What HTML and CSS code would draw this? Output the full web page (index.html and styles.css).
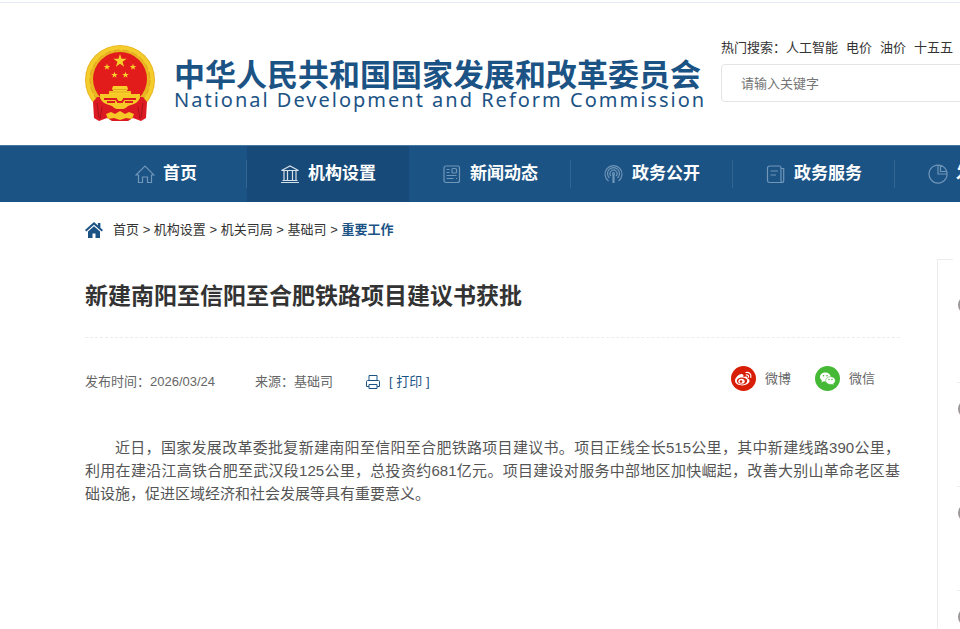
FILE: index.html
```html
<!DOCTYPE html>
<html lang="zh-CN">
<head>
<meta charset="utf-8">
<meta name="viewport" content="width=device-width, initial-scale=1">
<title>新建南阳至信阳至合肥铁路项目建议书获批</title>
<link rel="stylesheet" href="styles.css">
</head>
<body>
<header class="header">
  <div class="container header-row">
    <a class="logo" href="#">
      <svg class="emblem" viewBox="0 0 70 76" aria-hidden="true">
        <defs>
          <path id="star" d="M0-1 .225-.309.951-.309.363.118.588.809 0 .382-.588.809-.363.118-.951-.309-.225-.309Z"/>
        </defs>
        <circle cx="35" cy="35" r="35" fill="#e9b521"/>
        <circle cx="35" cy="35" r="32" fill="none" stroke="#f4cc2c" stroke-width="4"/>
        <circle cx="35" cy="35" r="30" fill="none" stroke="#dfa51e" stroke-width="1" stroke-dasharray="6 3"/>
        <circle cx="35" cy="34" r="27" fill="#e21b1b"/>
        <g fill="#f8d22c">
          <use href="#star" transform="translate(35 16) scale(7)"/>
          <use href="#star" transform="translate(22 22) scale(3.5)"/>
          <use href="#star" transform="translate(48 22) scale(3.5)"/>
          <use href="#star" transform="translate(29.500 30) scale(3.5)"/>
          <use href="#star" transform="translate(40.500 30) scale(3.5)"/>
        </g>
        <path d="M28 41h14l1 3h-1v2h4v3H24v-3h4v-2h-1Z" fill="#f8cf2b"/>
        <path d="M27 44.500h16M24 47h22" stroke="#e0aa1f" stroke-width="1"/>
        <path d="M12 52h46l4 5-1 16-5 3-8-3-5 3H27l-5-3-8 3-5-3-1-16Z" fill="#dc1a22"/>
        <path d="M15 49h40v4c-2 4-5 6-9 7-5 1-5 4-8 4h-6c-3 0-3-3-8-4-4-1-7-3-9-7Z" fill="#f6c927"/>
        <path d="M19 54h12l2 3h4l2-3h12M22 57h8M40 57h8" fill="none" stroke="#dc1a22" stroke-width="2"/>
        <path d="m21 69 5-2 4 2 5-3 5 3 4-2 5 2-2 5-6-1-6 2-6-2-6 1Z" fill="#f6c927"/>
        <path d="m12 58 2 15m3-11-2 12m43-16-2 15m-3-11 2 12" stroke="#a9131d" stroke-width="1"/>
      </svg>
      <span class="logo-text">
        <strong class="logo-cn">中华人民共和国国家发展和改革委员会</strong>
        <span class="logo-en" lang="en">National Development and Reform Commission</span>
      </span>
    </a>
    <div class="search">
      <div class="hot"><span>热门搜索：</span><a href="#">人工智能</a><a href="#">电价</a><a href="#">油价</a><a href="#">十五五</a></div>
      <input class="search-box" type="text" aria-label="搜索" placeholder="请输入关键字">
    </div>
  </div>
</header>

<nav class="nav" aria-label="主导航">
  <ul class="container nav-list">
    <li><a class="nav-link" href="#">
      <svg class="nav-icon" viewBox="0 0 20 20" aria-hidden="true"><path d="M1 11 10 2l9 9h-2.500v7.500h-4v-5.500h-5v5.500h-4V11Z"/></svg>首页</a></li>
    <li><a class="nav-link active" href="#">
      <svg class="nav-icon" viewBox="0 0 20 20" aria-hidden="true"><path d="M1.500 6.500 10 2l8.500 4.500ZM1 18.500h18M2.500 16.500h15M4 7v9M7.500 7v9M12.500 7v9M16 7v9"/></svg>机构设置</a></li>
    <li><a class="nav-link" href="#">
      <svg class="nav-icon" viewBox="0 0 20 20" aria-hidden="true"><rect x="2" y="2" width="15.500" height="16.500" rx="2"/><rect x="10" y="4.500" width="4.500" height="4.500" rx="1"/><path d="M4.500 5.500h3M4.500 8.500h3M4.500 11.500h10M4.500 14.500h7M14 14.500h1"/></svg>新闻动态</a></li>
    <li><a class="nav-link" href="#">
      <svg class="nav-icon" viewBox="0 0 20 20" aria-hidden="true"><path d="M4.500 17a8.500 8.500 0 1 1 10 0M5.500 14a6 6 0 1 1 8 0M7 12a3.500 3.500 0 1 1 5 0"/><circle cx="9.500" cy="9.500" r="1"/><path d="M9 10.500v8h1v-8"/></svg>政务公开</a></li>
    <li><a class="nav-link" href="#">
      <svg class="nav-icon" viewBox="0 0 20 20" aria-hidden="true"><path d="M16.500 18.500H3.500a2 2 0 0 1-2-2V4a2 2 0 0 1 2-2H13a2 2 0 0 1 2 2v13a1.300 1.300 0 0 0 2.700 0V4.500H15M4.500 7H12M4.500 11H10"/></svg>政务服务</a></li>
    <li><a class="nav-link" href="#">
      <svg class="nav-icon" viewBox="0 0 20 20" aria-hidden="true"><path d="M14 2a9 9 0 1 0 4.500 5"/><path d="M10 1v9h9M12.500 1.500v6h6A8 8 0 0 0 12.500 1.500Z"/></svg>发改数据</a></li>
    <li><a class="nav-link" href="#">互动交流</a></li>
  </ul>
</nav>

<div class="container page">
  <main class="main">
    <nav class="crumbs" aria-label="当前位置">
      <svg class="crumb-icon" viewBox="0 0 18 16" aria-hidden="true"><path d="M9 0 0 8l1.300 1.400L9 2.700l7.700 6.700L18 8l-2.600-2.300V1h-2.500v2.500ZM9 4.200 3 9.500V16h4.500v-4.500h3V16H15V9.500Z"/></svg>
      <span><a href="#">首页</a> &gt; <a href="#">机构设置</a> &gt; <a href="#">机关司局</a> &gt; <a href="#">基础司</a> &gt; <a class="current" href="#">重要工作</a></span>
    </nav>
    <article>
      <h1 class="title">新建南阳至信阳至合肥铁路项目建议书获批</h1>
      <div class="meta">
        <div class="facts">
          <span>发布时间：2026/03/24</span>
          <span class="source">来源：基础司</span>
          <button class="print" type="button">
            <svg class="print-icon" viewBox="0 0 16 16" aria-hidden="true"><path d="M4 6V1.500h8V6M4 12.500H1.500v-5a1 1 0 0 1 1-1h11a1 1 0 0 1 1 1v5H12M4 10.500h8v4H4Z"/></svg>
            [ 打印 ]
          </button>
        </div>
        <div class="share">
          <a href="#"><svg class="share-icon" viewBox="0 0 25 25" aria-hidden="true">
            <circle cx="12.500" cy="12.500" r="12.500" fill="#d81e06"/>
            <path d="M10.500 8C8 8 4 11.500 4 14.800c0 3 3.700 4.700 7.200 4.700 4 0 7.300-2.300 7.300-4.700 0-1.400-1-2.100-2-2.400.4-1.300-.5-2.100-2-1.900l-2.200.5c.5-1.600.2-3-1.800-3Z" fill="#fff"/>
            <ellipse cx="11" cy="15" rx="5.200" ry="3.400" fill="#d81e06"/>
            <ellipse cx="10.500" cy="15.200" rx="3.200" ry="2.500" fill="#fff"/>
            <circle cx="10" cy="15.500" r="1.300" fill="#d81e06"/>
            <path d="M15 6.500c3.500-.6 5.700 2 4.800 5M15.200 8.800c1.700-.2 2.700 1 2.300 2.400" fill="none" stroke="#fff" stroke-width="1.200" stroke-linecap="round"/>
          </svg>微博</a>
          <a href="#"><svg class="share-icon" viewBox="0 0 25 25" aria-hidden="true">
            <circle cx="12.500" cy="12.500" r="12.500" fill="#45b936"/>
            <path d="M10.300 6.500c-3 0-5.300 2-5.300 4.500 0 1.500.8 2.700 2 3.500l-.5 1.900 2.200-1.100 1.600.2c3 0 5.400-2 5.400-4.500s-2.400-4.500-5.400-4.500Z" fill="#fff"/>
            <path d="M15.500 10.700c-2.800 0-4.900 1.700-4.900 3.900s2.100 3.900 4.900 3.900l1.500-.2 1.900 1-.5-1.600c1.100-.7 1.900-1.800 1.900-3.100 0-2.200-2.200-3.900-4.800-3.900Z" fill="#fff" stroke="#45b936" stroke-width=".5"/>
            <g fill="#45b936"><circle cx="8.500" cy="9.800" r=".8"/><circle cx="12" cy="9.800" r=".8"/><circle cx="14" cy="13.500" r=".7"/><circle cx="17" cy="13.500" r=".7"/></g>
          </svg>微信</a>
        </div>
      </div>
      <p class="text">近日，国家发展改革委批复新建南阳至信阳至合肥铁路项目建议书。项目正线全长515公里，其中新建线路390公里，利用在建沿江高铁合肥至武汉段125公里，总投资约681亿元。项目建设对服务中部地区加快崛起，改善大别山革命老区基础设施，促进区域经济和社会发展等具有重要意义。</p>
    </article>
  </main>
  <aside class="side">
    <div class="side-edge"></div>
    <ul class="side-list">
      <li></li><li></li><li></li><li></li>
    </ul>
  </aside>
</div>
</body>
</html>
```
FILE: styles.css
```css
* {
  box-sizing: border-box;
}

html {
  overflow: hidden;
}

body {
  margin: 0;
  background: #fff;
  color: #333;
  font: 13px/20px "Liberation Sans", "Noto Sans CJK SC", sans-serif;
}

a {
  color: inherit;
  text-decoration: none;
}

ul {
  margin: 0;
  padding: 0;
  list-style: none;
}

.container {
  min-width: 1134px;
  margin: 0 0 0 85px;
}

.header {
  margin-top: 2px;
  border-top: 1px solid #e2ebf3;
}

.header-row {
  display: flex;
  align-items: flex-start;
  gap: 16px;
  padding: 35px 0 24px;
}

.logo {
  display: flex;
  flex: none;
  gap: 19px;
  width: 620px;
  padding-top: 7px;
  color: #1c5385;
}

.emblem {
  flex: none;
  width: 70px;
  height: 76px;
}

.logo-text {
  display: flex;
  flex-direction: column;
  padding-top: 15px;
  white-space: nowrap;
}

.logo-cn {
  font-size: 31px;
  font-weight: 700;
  line-height: 32px;
}

.logo-en {
  font-family: "Noto Sans", sans-serif;
  font-size: 20px;
  letter-spacing: 2px;
  line-height: 16px;
}

.search {
  flex: 1;
}

.hot {
  display: flex;
  gap: 8px;
  margin-bottom: 6px;
  white-space: nowrap;
}

.hot span {
  margin-right: -8px;
}

.search-box {
  display: block;
  width: 100%;
  height: 38px;
  padding: 0 19px;
  border: 1px solid #e4e4e4;
  border-radius: 4px;
  background: #fff;
  color: #333;
  font: inherit;
}

.search-box::placeholder {
  color: #757575;
}

.nav {
  border-top: 1px solid #4478a3;
  background: #1c5385;
}

.nav-list {
  display: grid;
  grid-template-columns: repeat(7, 162px);
}

.nav-link {
  display: flex;
  align-items: center;
  justify-content: center;
  gap: 8px;
  height: 56px;
  background: linear-gradient(#326592, #326592) right center / 1px 28px no-repeat;
  color: #fff;
  font-size: 17px;
  font-weight: 700;
}

.nav-link.active {
  background: #174a78;
}

.nav-icon {
  width: 20px;
  height: 20px;
  fill: none;
  stroke: #7096b8;
  stroke-width: 1.2;
}

.active .nav-icon {
  stroke: #d5e0e9;
}

.page {
  display: grid;
  grid-template-columns: 815px 1fr;
  gap: 37px;
}

.crumbs {
  display: flex;
  align-items: center;
  gap: 10px;
  padding-top: 18px;
}

.crumb-icon {
  width: 18px;
  height: 16px;
  fill: #1c5385;
}

.current {
  color: #1c5385;
  font-weight: 700;
}

.title {
  margin: 0;
  padding: 40px 0 25px;
  border-bottom: 1px dashed #ececec;
  font-size: 23px;
  line-height: 32px;
}

.meta {
  display: flex;
  align-items: flex-start;
  justify-content: space-between;
  padding-top: 28px;
  color: #666;
}

.facts {
  display: flex;
  align-items: center;
  padding-top: 6px;
}

.source {
  margin-left: 40px;
}

.print {
  display: flex;
  align-items: center;
  gap: 8px;
  margin-left: 32px;
  padding: 0;
  border: 0;
  background: none;
  color: #1c5385;
  font: inherit;
}

.print-icon {
  width: 16px;
  height: 16px;
  fill: none;
  stroke: #1c5385;
  stroke-width: 1;
}

.share {
  display: flex;
  gap: 24px;
  padding-right: 25px;
}

.share a {
  display: flex;
  align-items: center;
  gap: 9px;
}

.share-icon {
  width: 25px;
  height: 25px;
}

.text {
  margin: 44px 0 0;
  color: #555;
  font-size: 15px;
  line-height: 23px;
  text-align: justify;
  text-indent: 2em;
}

.side {
  margin-top: 57px;
  border-left: 1px solid #ececec;
}

.side-edge {
  width: 15px;
  height: 19px;
  border-top: 1px solid #ececec;
}

.side-list {
  padding-left: 19px;
}

.side-list li {
  height: 104px;
  padding: 17px 0 0 1px;
  border-top: 1px solid #ececec;
}

.side-list li:first-child {
  border-top-color: transparent;
}

.side-list li::before {
  content: "";
  display: block;
  width: 18px;
  height: 18px;
  border-radius: 50%;
  background: #9c9599;
}
```
